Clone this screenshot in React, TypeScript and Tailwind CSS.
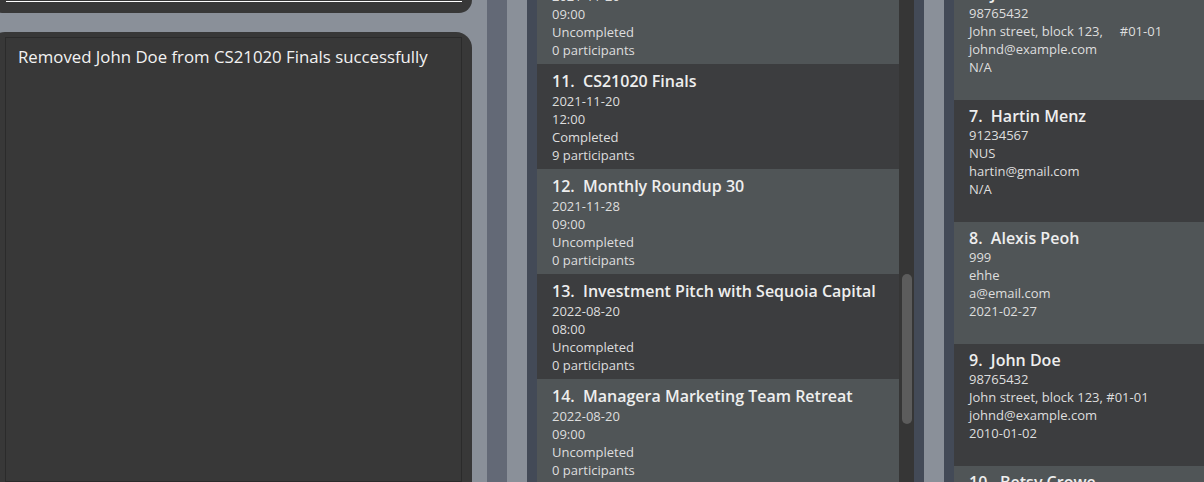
const events = [
  { id: 10, name: 'Weekly Sync', date: '2021-11-20', time: '09:00', status: 'Uncompleted', count: 0 },
  { id: 11, name: 'CS21020 Finals', date: '2021-11-20', time: '12:00', status: 'Completed', count: 9 },
  { id: 12, name: 'Monthly Roundup 30', date: '2021-11-28', time: '09:00', status: 'Uncompleted', count: 0 },
  { id: 13, name: 'Investment Pitch with Sequoia Capital', date: '2022-08-20', time: '08:00', status: 'Uncompleted', count: 0 },
  { id: 14, name: 'Managera Marketing Team Retreat', date: '2022-08-20', time: '09:00', status: 'Uncompleted', count: 0 },
];

const people = [
  { id: 6, name: 'John Doe', phone: '98765432', address: 'John street, block 123,     #01-01', email: 'johnd@example.com', birthday: 'N/A' },
  { id: 7, name: 'Hartin Menz', phone: '91234567', address: 'NUS', email: 'hartin@gmail.com', birthday: 'N/A' },
  { id: 8, name: 'Alexis Peoh', phone: '999', address: 'ehhe', email: 'a@email.com', birthday: '2021-02-27' },
  { id: 9, name: 'John Doe', phone: '98765432', address: 'John street, block 123, #01-01', email: 'johnd@example.com', birthday: '2010-01-02' },
  { id: 10, name: 'Betsy Crowe', phone: '98761234', address: 'Clementi Ave 2', email: 'betsy@example.com', birthday: 'N/A' },
];

function EventCard({ event, index }: { event: (typeof events)[number]; index: number }) {
  const isEven = index % 2 === 0;
  return (
    <div
      className={`h-[105px] shrink-0 pl-[15px] pt-[7px] ${isEven ? 'bg-[#505557]' : 'bg-[#3c3d3f]'}`}
    >
      <p className="whitespace-pre text-[16px] font-semibold leading-[20px] text-[#eeeeee]">
        {`${event.id}.  ${event.name}`}
      </p>
      <div className="mt-[1px] text-[13px] leading-[18px] text-[#dedede]">
        <p>{event.date}</p>
        <p>{event.time}</p>
        <p>{event.status}</p>
        <p>{event.count} participants</p>
      </div>
    </div>
  );
}

function PersonCard({ person, index }: { person: (typeof people)[number]; index: number }) {
  const isEven = index % 2 === 0;
  return (
    <div
      className={`h-[122px] shrink-0 pl-[15px] pt-[6px] ${isEven ? 'bg-[#505557]' : 'bg-[#3c3d3f]'}`}
    >
      <p className="whitespace-pre text-[16px] font-semibold leading-[20px] text-[#eeeeee]">
        {`${person.id}.  ${person.name}`}
      </p>
      <div className="text-[13px] leading-[18px] text-[#dedede]">
        <p>{person.phone}</p>
        <p className="whitespace-pre">{person.address}</p>
        <p>{person.email}</p>
        <p>{person.birthday}</p>
      </div>
    </div>
  );
}

export default function App() {
  return (
    <div className="flex h-[482px] w-[1204px] overflow-hidden bg-[#8a9099] font-['Open_Sans',sans-serif]">
      {/* command + result pane */}
      <div className="flex w-[487px] shrink-0 flex-col pr-[15px]">
        <div className="-ml-[11px] h-[13px] shrink-0 rounded-b-[16px] bg-[#383838] pl-[17px] pr-[10px] pt-[1px]">
          <div className="h-px bg-white" />
        </div>
        <div className="-ml-[11px] mt-[19px] flex flex-1 flex-col rounded-t-[16px] bg-[#383838] pl-[16px] pr-[10px] pt-[5px]">
          <div className="flex-1 border border-[#2b2b2b] px-[12px] pt-[9px]">
            <p className="text-[16.8px] leading-[20px] text-[#f2f2f2]">
              Removed John Doe from CS21020 Finals successfully
            </p>
          </div>
        </div>
      </div>

      {/* splitter */}
      <div className="w-[20px] shrink-0 bg-[#636976]" />

      {/* event list */}
      <div className="flex shrink-0 px-[20px]">
        <div className="flex bg-[#434a57] px-[10px]">
          <div className="w-[362px] overflow-hidden">
            <div className="-mt-[41px] flex flex-col">
              {events.map((event, index) => (
                <EventCard key={event.id} event={event} index={index} />
              ))}
            </div>
          </div>
          <div className="w-[15px] bg-[#363636] pl-[3px] pt-[274px]">
            <div className="h-[150px] w-[10px] rounded-[5px] bg-[#5c5c5c]" />
          </div>
        </div>
      </div>

      {/* person list */}
      <div className="flex flex-1 bg-[#434a57] pl-[10px]">
        <div className="flex-1 overflow-hidden">
          <div className="-mt-[22px] flex flex-col">
            {people.map((person, index) => (
              <PersonCard key={person.id + person.name} person={person} index={index} />
            ))}
          </div>
        </div>
      </div>
    </div>
  );
}
